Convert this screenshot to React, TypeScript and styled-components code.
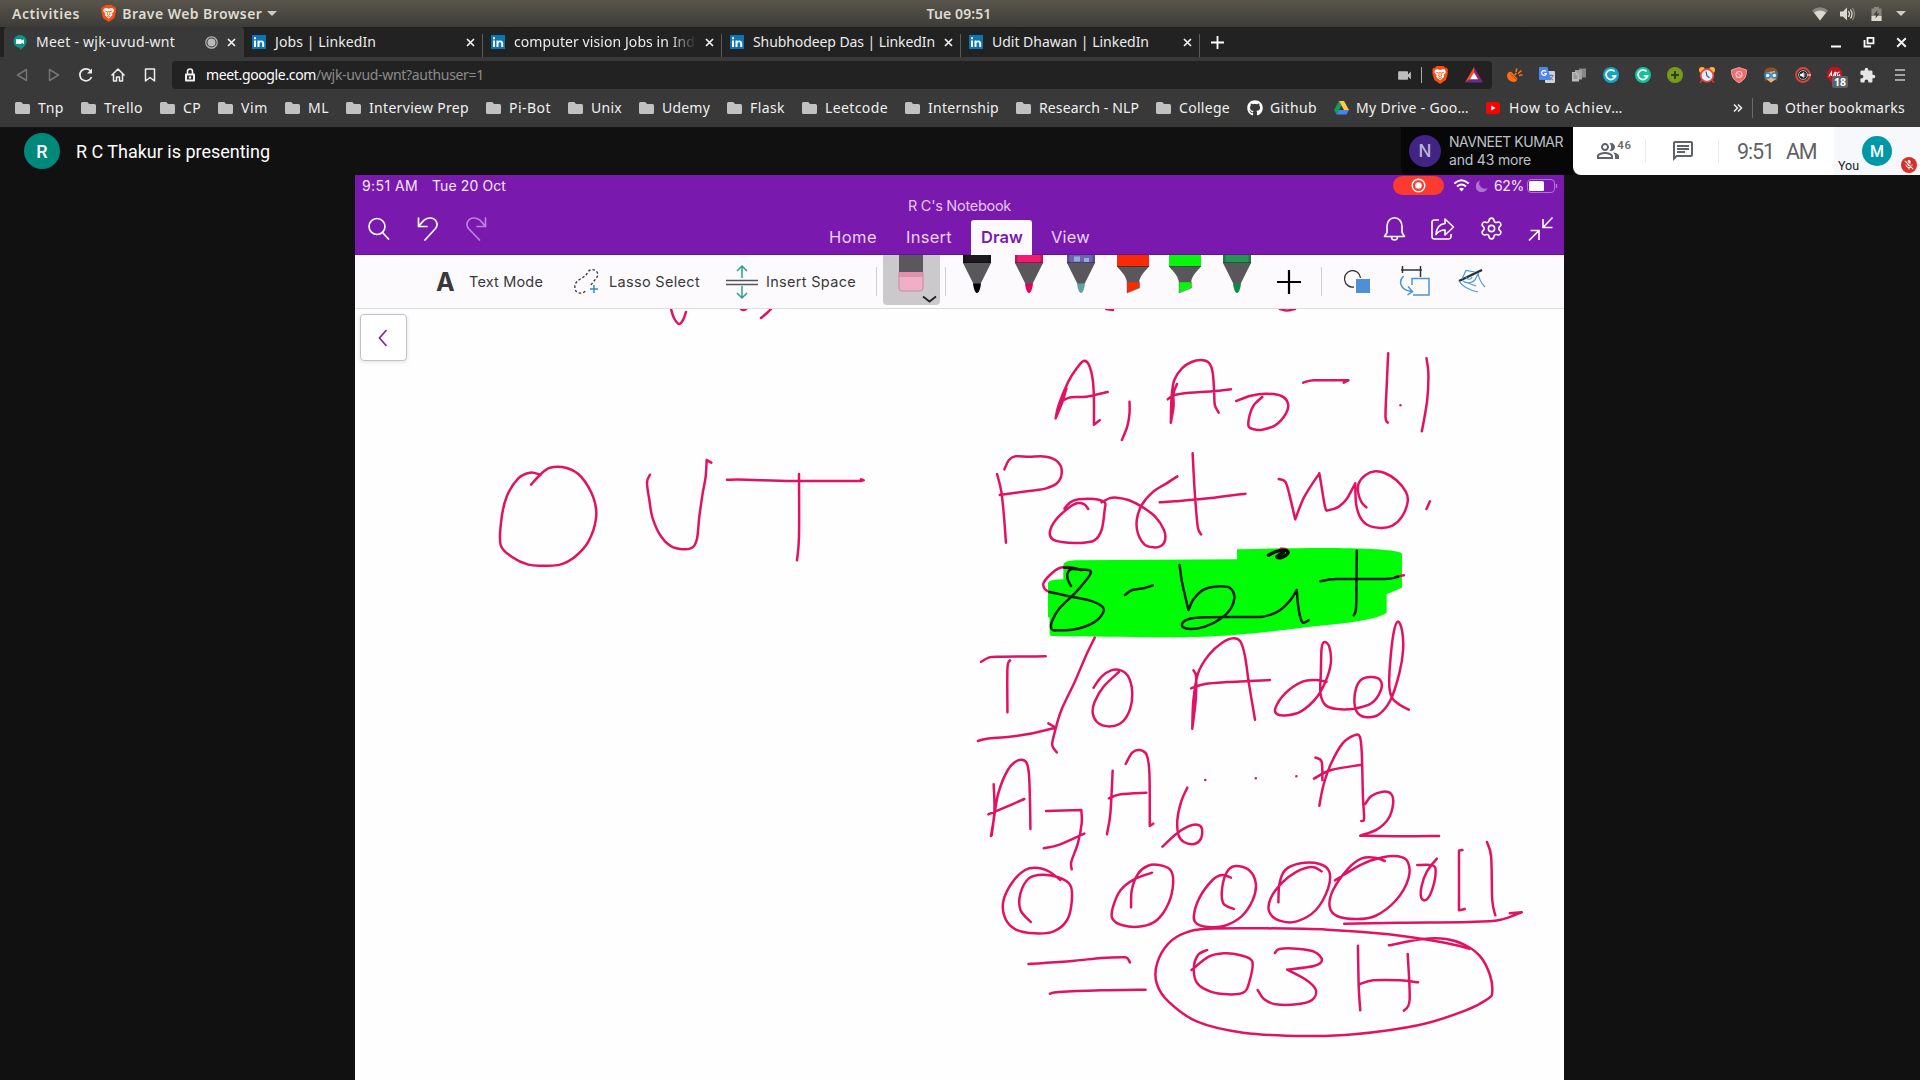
import React, { useLayoutEffect, useRef, useState } from 'react';
import styled, { createGlobalStyle } from 'styled-components';
import { FaGithub } from 'react-icons/fa';
import { MdExtension, MdOutlineChat, MdVideocam, MdMicOff, MdOutlinePeopleAlt } from 'react-icons/md';
import { Settings } from 'lucide-react';

const Global = createGlobalStyle`
  * { box-sizing: border-box; }
  body { margin: 0; background: #111; overflow: hidden; }
  svg { display: block; flex: none; }
`;

const UI = `"Noto Sans", "Open Sans", sans-serif`;
const MEET = `Roboto, "Noto Sans", sans-serif`;
const PAD = `Inter, "Liberation Sans", sans-serif`;

/* ---------- text that tracks itself to a fixed measure ---------- */

const Measure = styled.span<{ $w: number }>`
  display: block;
  flex: none;
  width: ${(p) => p.$w}px;
  white-space: nowrap;
`;

function Fit({ w, children }: { w: number; children: string }) {
  const ref = useRef<HTMLSpanElement>(null);
  const [track, setTrack] = useState(0);
  useLayoutEffect(() => {
    if (ref.current) {
      const natural = ref.current.getBoundingClientRect().width;
      setTrack((w - natural) / children.length);
    }
  }, [w, children]);
  return (
    <Measure $w={w}>
      <span ref={ref} style={{ letterSpacing: track }}>{children}</span>
    </Measure>
  );
}

/* ---------- desktop panel ---------- */

const Screen = styled.div`
  width: 1920px;
  height: 1080px;
  display: flex;
  flex-direction: column;
  overflow: hidden;
  font-family: ${UI};
`;

const DesktopBar = styled.header`
  height: 27px;
  flex: none;
  display: grid;
  grid-template-columns: 1fr auto 1fr;
  align-items: center;
  padding: 0 14px 0 12px;
  background: linear-gradient(#59554c, #3d3c38);
  color: #dfdbd2;
  font-size: 14px;
  font-weight: 600;
  line-height: 26px;
`;

const DesktopLeft = styled.div`
  display: flex;
  align-items: center;
`;

const AppMenu = styled.div`
  display: flex;
  align-items: center;
  margin-left: 21px;
  gap: 6px;
`;

const Caret = styled.span<{ $ml?: number }>`
  border: 5px solid transparent;
  border-top-color: #cfccc5;
  border-bottom: 0;
  margin-left: ${(p) => p.$ml ?? 0}px;
`;

const Tray = styled.div`
  display: flex;
  align-items: center;
  justify-content: flex-end;
`;

const TrayIcon = styled.span<{ $mr: number }>`
  margin-right: ${(p) => p.$mr}px;
`;

/* ---------- browser chrome ---------- */

const TabStrip = styled.div`
  height: 30px;
  flex: none;
  display: flex;
  background: #222;
  padding-left: 4px;
`;

const Tab = styled.div<{ $active?: boolean }>`
  width: ${(p) => (p.$active ? 240 : 239)}px;
  display: flex;
  align-items: center;
  padding: 0 8px 0 ${(p) => (p.$active ? 9 : 8)}px;
  background: ${(p) => (p.$active ? '#393939' : 'transparent')};
  border-radius: 4px 4px 0 0;
  color: #ececec;
  font-size: 14px;
  line-height: 20px;
  gap: 9px;
`;

const TabRule = styled.i`
  width: 1px;
  height: 23px;
  background: #5a5a5a;
  align-self: flex-end;
  margin-left: -1px;
`;

const TabTitle = styled.div<{ $fade?: boolean }>`
  flex: 1;
  min-width: 0;
  ${(p) => p.$fade && 'mask-image: linear-gradient(90deg, #000 86%, transparent 100%);'}
`;

const NewTab = styled.div`
  margin-left: 11px;
  display: flex;
  align-items: center;
`;

const WindowButtons = styled.div`
  margin-left: auto;
  display: flex;
  align-items: center;
  padding-right: 13px;
  gap: 21px;
`;

const Toolbar = styled.div`
  height: 36px;
  flex: none;
  display: flex;
  align-items: center;
  background: #393939;
  padding: 0 12px 0 14px;
`;

const NavIcons = styled.div`
  display: flex;
  gap: 16px;
  width: 158px;
`;

const AddressBar = styled.div`
  width: 1320px;
  height: 28px;
  border-radius: 4px;
  background: #222;
  display: flex;
  align-items: center;
  padding: 0 9px 0 12px;
  font-size: 14px;
  color: #8b8b8b;
  line-height: 20px;
  svg.lock { margin-right: 10px; }
`;

const Host = styled.span`
  color: #fff;
`;

const AddressEnd = styled.div`
  margin-left: auto;
  display: flex;
  align-items: center;
`;

const AddressRule = styled.i`
  width: 1px;
  height: 16px;
  background: #aaa;
  margin: 0 10px 0 8px;
`;

const Extensions = styled.div`
  flex: 1;
  display: flex;
  justify-content: space-between;
  margin-left: 15px;
`;

const Badged = styled.span`
  position: relative;
`;

const Badge = styled.b`
  position: absolute;
  left: 5px;
  top: 9px;
  width: 16px;
  height: 12px;
  border-radius: 2px;
  background: #5f6368;
  color: #fff;
  font-size: 10.5px;
  line-height: 12px;
  text-align: center;
`;

const Bookmarks = styled.nav`
  height: 34px;
  flex: none;
  display: flex;
  align-items: center;
  background: #393939;
  padding: 0 15px 4px;
  color: #f1f1f1;
  font-size: 14px;
  line-height: 20px;
`;

const Bookmark = styled.div<{ $gap: number }>`
  display: flex;
  align-items: center;
  gap: ${(p) => p.$gap}px;
  margin-right: 17px;
`;

const BookmarksEnd = styled.div`
  margin-left: auto;
  display: flex;
  align-items: center;
  gap: 7px;
`;

const EndRule = styled.i`
  width: 1px;
  height: 20px;
  background: #6a6a6a;
  margin: 0 3px 0 2px;
`;

/* ---------- Meet ---------- */

const MeetBar = styled.div`
  height: 48px;
  flex: none;
  display: flex;
  align-items: center;
  background: #111;
  padding-left: 24px;
  font-family: ${MEET};
`;

const Avatar = styled.div<{ $size: number; $bg: string; $fs: number }>`
  width: ${(p) => p.$size}px;
  height: ${(p) => p.$size}px;
  border-radius: 50%;
  background: ${(p) => p.$bg};
  color: #fff;
  font-size: ${(p) => p.$fs}px;
  font-weight: 500;
  display: flex;
  align-items: center;
  justify-content: center;
  flex: none;
`;

const Presenting = styled.div`
  margin-left: 16px;
  color: #fff;
  font-size: 18px;
`;

const Speaker = styled.div`
  margin-left: auto;
  width: 172px;
  height: 48px;
  background: #070707;
  border-radius: 0 0 0 6px;
  color: #bdc1c6;
  display: flex;
  align-items: center;
  gap: 8px;
  padding: 0 0 1px 8px;
  font-size: 14px;
  line-height: 18px;
  font-family: Inter, sans-serif;
`;

const DimAvatar = styled(Avatar)`
  color: #bdb6d4;
`;

const MeetPanel = styled.div`
  width: 347px;
  height: 48px;
  background: #fff;
  border-radius: 0 0 0 8px;
  display: flex;
  align-items: stretch;
  color: #5f6368;
`;

const PanelCell = styled.div<{ $w: number; $line?: boolean }>`
  width: ${(p) => p.$w}px;
  display: flex;
  align-items: center;
  justify-content: center;
  background: ${(p) => (p.$line ? 'linear-gradient(#e8eaed, #e8eaed) right center / 1px 24px no-repeat' : 'none')};
`;

const PeopleIcon = styled.span`
  margin-left: 9px;
`;

const Count = styled.sup`
  font-size: 11.5px;
  font-weight: 500;
  line-height: 12px;
  margin: 0 0 12px -3px;
  letter-spacing: 0.6px;
`;

const Clock = styled.div`
  font-size: 21.5px;
  display: flex;
  gap: 12px;
`;

const Self = styled.div`
  flex: 1;
  background: #f7f8fc;
  display: flex;
  align-items: flex-end;
  padding: 0 3px 2px 4px;
  font-size: 12.5px;
  color: #202124;
  line-height: 15px;
`;

const SelfAvatar = styled.div`
  margin: 0 17px 7px 3px;
`;

const Muted = styled.div`
  width: 16px;
  height: 16px;
  border-radius: 50%;
  background: #d93025;
  color: #fff;
  display: flex;
  align-items: center;
  justify-content: center;
  flex: none;
  margin-left: -8px;
`;

/* ---------- shared tablet ---------- */

const Stage = styled.main`
  flex: 1;
  min-height: 0;
  background: #111;
  padding-left: 355px;
`;

const Tablet = styled.section`
  width: 1209px;
  height: 905px;
  display: flex;
  flex-direction: column;
  background: #fefefe;
  font-family: ${PAD};
`;

const PurpleHead = styled.div`
  height: 80px;
  background: #7a19ad;
  color: #f6e9fc;
  display: grid;
  grid-template-columns: 466px 1fr 181px;
  border-bottom: 1px solid #641494;
`;

const HeadSide = styled.div`
  display: flex;
  flex-direction: column;
`;

const Status = styled.div<{ $right?: boolean }>`
  height: 22px;
  display: flex;
  align-items: center;
  gap: ${(p) => (p.$right ? 0 : 14)}px;
  padding: 0 0 1px ${(p) => (p.$right ? 10 : 7)}px;
  font-size: 14px;
  line-height: 20px;
`;

const RecordPill = styled.div`
  width: 51px;
  height: 19px;
  border-radius: 10px;
  background: #fc3b30;
  display: flex;
  align-items: center;
  justify-content: center;
  margin-right: 9px;
`;

const MoonIcon = styled.span`
  margin: 0 6px;
`;

const BatteryIcon = styled.span`
  margin-left: 3px;
`;

const HeadIcons = styled.div<{ $pl: number; $gap: number }>`
  flex: 1;
  display: flex;
  align-items: flex-start;
  padding: 19px 0 0 ${(p) => p.$pl}px;
  gap: ${(p) => p.$gap}px;
`;

const HeadMiddle = styled.div`
  display: flex;
  flex-direction: column;
`;

const NoteTitle = styled.div`
  padding: 22px 0 0 87px;
  height: 45px;
  font-size: 14.5px;
  line-height: 18px;
  color: #e6c5f5;
`;

const RibbonTabs = styled.div`
  display: flex;
  align-items: stretch;
  flex: 1;
  font-size: 16.5px;
  line-height: 35px;
  color: #ecd2f8;
`;

const RibbonTab = styled.div<{ $active?: boolean; $ml: number }>`
  margin-left: ${(p) => p.$ml}px;
  margin-bottom: -1px;
  ${(p) => p.$active && 'background:#fcfafd;color:#7a19ad;font-weight:600;border-radius:3px 3px 0 0;padding:0 9px 0 10px;'}
`;

const Ribbon = styled.div`
  height: 54px;
  flex: none;
  background: #fcfafd;
  border-bottom: 1px solid #dedde0;
  display: flex;
  align-items: center;
  color: #3a383c;
  font-size: 14.5px;
  padding-left: 81px;
`;

const Tool = styled.div<{ $iw: number; $gap: number; $ml: number }>`
  display: flex;
  align-items: center;
  margin-left: ${(p) => p.$ml}px;
  svg { width: ${(p) => p.$iw}px; margin-right: ${(p) => p.$gap}px; }
`;

const BoldA = styled.span`
  font-size: 25px;
  font-weight: 700;
  width: 33px;
  line-height: 30px;
`;

const RibbonRule = styled.i<{ $ml: number }>`
  width: 1px;
  height: 29px;
  background: #cfcdd1;
  margin-left: ${(p) => p.$ml}px;
`;

const EraserSlot = styled.div`
  width: 57px;
  height: 50px;
  align-self: flex-start;
  margin-left: 6px;
  background: #cbc9cc;
  border-radius: 0 0 4px 4px;
`;

const Pens = styled.div`
  display: flex;
  align-self: flex-start;
  gap: 20px;
  margin-left: 15px;
`;

const RibbonIcon = styled.div<{ $ml: number }>`
  margin-left: ${(p) => p.$ml}px;
`;

const Page = styled.div`
  flex: 1;
  min-height: 0;
  position: relative;
`;

const BackButton = styled.div`
  position: absolute;
  left: 5px;
  top: 5px;
  width: 47px;
  height: 47px;
  border: 1px solid #c4c2c6;
  border-radius: 4px;
  background: #fff;
  box-shadow: 0 1px 4px rgba(0, 0, 0, 0.12);
  display: flex;
  align-items: center;
  justify-content: center;
  padding-right: 2px;
`;

/* ---------- icons ---------- */

const BraveLion = ({ s = 17 }: { s?: number }) => (
  <svg width={s * 0.9} height={s} viewBox="0 0 16 18">
    <path d="M4.500 0h7l1.600 1.800 1.500-.1L16 4l-.6 1.600.4 1.400-2 7L8 18l-5.800-4-2-7 .4-1.400L0 4l1.400-2.300 1.500.1z" fill="#fb4c12" />
    <path d="M3.300 3.600 5.500 3.300 8 4l2.500-.7 2.200.3 1.200 2.400-2.300 3 .4 1.800L9.600 13 8 14.600 6.400 13 4 10.800 4.400 9 2.100 6z" fill="#fff" />
    <path d="M4.200 6.300l2.500.8L8 6.600l1.300.5 2.500-.8M7.100 7.500 6.500 10 8 11l1.500-1-.6-2.500M6.400 11.700 8 12.600l1.600-.9" fill="none" stroke="#fb4c12" strokeWidth=".9" />
  </svg>
);

const BatMark = styled.svg`
  margin-left: 17px;
`;

const Folder = () => (
  <svg width="15" height="14" viewBox="0 0 15 14">
    <path d="M1.500 1h4.800l1.700 2h5.500A1.500 1.500 0 0 1 15 4.500v7a1.500 1.500 0 0 1-1.500 1.500h-12A1.500 1.500 0 0 1 0 11.500v-9A1.500 1.500 0 0 1 1.500 1z" fill="#c1c1c1" />
  </svg>
);

const LinkedIn = () => (
  <svg width="14" height="14" viewBox="0 0 14 14">
    <rect width="14" height="14" fill="#0a76b7" />
    <path d="M2 5.500h2V12H2zM2 2.200h2v2H2zM5.500 5.500h2v1c.8-1.600 4.700-1.700 4.700 1.800V12h-2V8.700c0-2.100-2.700-2-2.700 0V12h-2z" fill="#fff" />
  </svg>
);

const Cross = ({ s = 9, w = 1.7 }: { s?: number; w?: number }) => (
  <svg width={s} height={s} viewBox="0 0 9 9"><path d="M1 1l7 7M8 1 1 8" stroke="#f2f2f2" strokeWidth={w} /></svg>
);

const MeetMark = () => (
  <svg width="14" height="15" viewBox="0 0 14 15">
    <path d="M7 0a6.300 6.300 0 0 1 6.500 6.300C13.500 10.500 10 13 6.800 15v-2.300A6.300 6.300 0 0 1 7 0z" fill="#0d9485" />
    <path d="M3 4.300h5.500v1.500L11 4.300v4.600L8.500 7.400v1.500H3z" fill="#fff" />
  </svg>
);

const Triangle = ({ flip }: { flip?: boolean }) => (
  <svg width="16" height="16" viewBox="0 0 16 16">
    <path d={flip ? 'M3.500 2.500 12.500 8l-9 5.500z' : 'M12.500 2.500 3.500 8l9 5.500z'} fill="none" stroke="#747474" strokeWidth="1.500" strokeLinejoin="round" />
  </svg>
);

const Grammar = ({ c }: { c: string }) => (
  <svg width="16" height="16" viewBox="0 0 16 16">
    <circle cx="8" cy="8" r="8" fill={c} />
    <path d="M11.500 4.500A4.800 4.800 0 1 0 12.600 8.800H8.800M11 11l1.700-2" fill="none" stroke="#fff" strokeWidth="1.700" />
  </svg>
);

const ExtensionRow = () => (
  <Extensions>
    <svg width="16" height="16" viewBox="0 0 16 16">
      <path d="M1.500 5.500c3-2 4 1 6 3s4 3.500 2 5.500c-2 1.600-6 1-8-1.500s-2-5.500 0-7z" fill="#ff6f0f" />
      <path d="M7.500 8l2-1.800M9 5 9.800 1.500M11 6.500l3.500-3M12 8.500l3.500-.8" stroke="#ff6f0f" strokeWidth="1.600" />
      <path d="M3 6.500l6.500 6" stroke="#8a3d0c" strokeWidth=".8" />
    </svg>
    <svg width="16" height="16" viewBox="0 0 16 16">
      <rect x="6" y="4" width="10" height="12" rx="1" fill="#cfd1d4" />
      <path d="M9.500 8.500h5M12 7.500v1M13.800 8.500c-.5 2-2 3.500-3.500 4.500M10.500 9.500c.8 1.500 2 2.800 3.500 3.500" stroke="#5c7f9e" fill="none" />
      <path d="M1 0h7.500L12 13H1a1 1 0 0 1-1-1V1a1 1 0 0 1 1-1z" fill="#4a87ee" />
      <path d="M7 4.500A2.400 2.400 0 1 0 7.400 6.500H5.200" fill="none" stroke="#fff" strokeWidth="1.200" />
    </svg>
    <svg width="16" height="16" viewBox="0 0 16 16">
      <path d="M8 1.500h7v9H8z" fill="#878787" /><path d="M4 3h7v9.500H4z" fill="#a2a2a2" /><path d="M1 5h4l3 3v6.500H1z" fill="#bcbcbc" />
      <path d="M2.500 9h4M2.500 11h4M2.500 7h2" stroke="#777" />
    </svg>
    <Grammar c="#16a5c4" />
    <Grammar c="#15c39a" />
    <svg width="16" height="16" viewBox="0 0 16 16"><circle cx="8" cy="8" r="8" fill="#779b1d" /><path d="M8 4v8M4 8h8" stroke="#333d10" strokeWidth="2" /></svg>
    <svg width="16" height="16" viewBox="0 0 16 16">
      <path d="M3 13 1 16M13 13l2 3" stroke="#d32" strokeWidth="1.500" />
      <circle cx="3" cy="3" r="3" fill="#ffb92e" /><circle cx="13" cy="3" r="3" fill="#ffb92e" />
      <circle cx="8" cy="8.500" r="6.300" fill="#e8eef7" stroke="#ee4444" strokeWidth="1.700" />
      <path d="M7 4.500l1 4.500 2.500 1.800" stroke="#345ba5" fill="none" strokeWidth="1.200" />
    </svg>
    <svg width="16" height="16" viewBox="0 0 16 16">
      <path d="M8 .5 15.500 3c0 6-1.500 10-7.500 12.700C2 13 .5 9 .5 3z" fill="#ef6c6c" stroke="#f4a0a0" />
      <circle cx="8" cy="7.500" r="3" fill="none" stroke="#fbd3d3" strokeWidth="1.100" /><path d="M6 5.500l4 4" stroke="#fbd3d3" />
    </svg>
    <svg width="16" height="16" viewBox="0 0 16 16">
      <path d="M1 7C1 2 4 .5 8 .5S15 2 15 7l-1 7-2-1-4 3-4-3-2 1z" fill="#8a5420" /><path d="M3 5.500 12 4l1 8-5 3.500L3.500 12z" fill="#e9b27c" />
      <circle cx="4.700" cy="8.500" r="2.500" fill="#e6f3ff" stroke="#1d87dd" strokeWidth="1.400" /><circle cx="11.300" cy="8.500" r="2.500" fill="#e6f3ff" stroke="#1d87dd" strokeWidth="1.400" />
    </svg>
    <svg width="16" height="16" viewBox="0 0 16 16">
      <circle cx="8" cy="8" r="7" fill="#3d3d3d" stroke="#e5423b" strokeWidth="1.800" /><circle cx="8" cy="8" r="4.400" fill="#1c1c1c" stroke="#aaa" />
      <path d="M5.500 7h1.300L8.500 5.400v5.200L6.800 9H5.500zM9.800 6v4" fill="#fff" stroke="#fff" strokeWidth=".6" /><path d="M12 8h4" stroke="#ddd" strokeWidth="1.300" />
    </svg>
    <Badged>
      <svg width="16" height="16" viewBox="0 0 16 16">
        <path d="M4 0h7l4 4v6l-4 5H4L0 10.500V4.500z" fill="#c5101d" />
        <path d="M2 9.500 4.500 5v4M6 9.500 8 5M8 5c2 0 1 2-.5 2 2 0 1 2.400-1 2.200M12.500 5c-3 0-2.500 4.500-.5 4 1 0 1-1.500.3-1.800" stroke="#fff" strokeWidth="1.100" fill="none" />
      </svg>
      <Badge>18</Badge>
    </Badged>
    <MdExtension size={17} color="#e6e6e6" />
    <svg width="16" height="16" viewBox="0 0 16 16"><path d="M3 3h10M3 8h10M3 13h10" stroke="#c4c4c4" strokeWidth="1.700" /></svg>
  </Extensions>
);

const Pen = ({ cap, tip, galaxy }: { cap: string; tip: string; galaxy?: boolean }) => (
  <svg width="32" height="40" viewBox="0 0 32 40">
    <path d="M2 8h28l-10.500 21h-7z" fill="#59575b" />
    <path d="M12 28.500h8C19.500 33 18 38 16 38s-3.500-5-4-9.500z" fill={tip} />
    <path d="M2 0h28v8H2z" fill={cap} />
    {galaxy && <path d="M9 1.500h6v5H9zM19 3h5v4h-5z" fill="#9fd0e6" opacity=".7" />}
    <path d="M2 0h2.500v8H2zM27.500 0H30v8h-2.500z" fill="#000" opacity=".2" />
    <path d="M2 7.500h28" stroke="#000" strokeOpacity=".35" />
  </svg>
);

const Marker = ({ c }: { c: string }) => (
  <svg width="32" height="40" viewBox="0 0 32 40" overflow="visible">
    <path d="M0 11h32c-1 3-9 8-10 16.500H10C9 19 1 14 0 11z" fill="#59575b" />
    <path d="M10 27h12.500v6L10 38z" fill={c} stroke="#555" strokeOpacity=".5" strokeWidth=".8" />
    <path d="M0 0h32v11.500H0z" fill={c} /><path d="M0 11.500h32" stroke="#000" strokeOpacity=".4" />
  </svg>
);

/* ---------- handwriting ---------- */

type Point = [number, number];

/* Turns "x,y x,y ..." samples into a smooth pen stroke. */
function ink(samples: string): string {
  const p = samples.trim().split(/\s+/).map((s) => s.split(',').map(Number) as Point);
  if (p.length === 1) return `M${p[0][0]} ${p[0][1]}h.1`;
  let d = `M${p[0][0]} ${p[0][1]}`;
  for (let i = 0; i < p.length - 1; i++) {
    const a = p[i - 1] ?? p[i];
    const b = p[i];
    const c = p[i + 1];
    const e = p[i + 2] ?? c;
    d += `C${b[0] + (c[0] - a[0]) / 6} ${b[1] + (c[1] - a[1]) / 6} ${c[0] - (e[0] - b[0]) / 6} ${c[1] - (e[1] - b[1]) / 6} ${c[0]} ${c[1]}`;
  }
  return d;
}

const OUT_WORD = [
  '153,134 180,105 210,83 260,84 303,110 341,175 348,235 325,305 285,350 240,374 190,377 145,374 95,350 62,315 64,240 80,170 115,115 150,98 182,104',
  '510,104 501,128 508,180 518,235 545,292 580,322 630,326 650,300 658,230 668,160 677,110 680,60',
  '680,60 694,68',
  '741,119 800,119 940,123 1143,123',
  '1143,118 1152,121 1143,123',
  '957,102 957,290 951,361',
];

const ADDRESS_LINES = [
  '250,325 258,285 283,215 305,175 323,153 337,165 347,210 350,270 350,344',
  '350,344 365,331',
  '250,325 268,275 278,235',
  '268,272 290,262 330,260 386,246',
  '443,275 443,310 437,350 423,390',
  '551,338 553,260 560,210 580,175 605,156 630,150 650,158 660,185 664,240 666,285 676,308',
  '551,338 558,290 558,250 567,222',
  '543,268 560,255 600,248 660,244 708,238',
  '722,273 760,257 800,251 840,258 857,280 852,310 825,345 790,359 765,357 754,348 757,315 768,285 790,261',
  '897,218 925,211 1015,211',
  '1015,211 1003,218',
  '1119,130 1115,230 1112,320 1118,338',
  '1151,286',
  '1219,145 1224,190 1221,270 1207,364',
  '97,492 108,545 115,620 120,698',
  '116,478 128,450 145,439 180,440 225,440 255,455 266,485 255,518 225,535 180,543 104,555',
  '335,597 325,583 305,580 280,597 250,630 235,665 242,688 270,697 310,699 350,692 370,660 378,600 378,577 350,567 310,568 288,577 273,596',
  '370,577 390,565 410,563 440,570 475,590 510,620 533,660 536,690 525,708 505,712 482,703 465,670 462,630 475,585 505,545 540,520 568,499',
  '608,430 612,520 617,600 622,655 630,673',
  '522,577 560,574 650,565 746,551',
  '833,507 850,515 860,550 876,628',
  '876,628 900,560 939,490',
  '939,490 945,530 955,595 965,600 990,590 1010,568 1033,520',
  '1033,520 1035,580 1045,620 1065,645 1100,654 1130,647 1155,620 1170,575 1165,545 1140,510 1110,489 1085,484 1060,495 1042,520 1041,550 1050,578 1062,592',
  '1228,574 1219,597',
];

const BIT_PINK = ['318,90 290,82 260,84 235,105 218,130 222,148 234,156', '1140,110 1160,106', '838,26 850,27 857,34'];

const BIT_BLACK = [
  '290,138 282,120 281,100 290,88 310,88 335,90 342,98 330,120 300,160 260,205 240,245 240,268 255,271 300,268 350,247 375,215 370,198 340,182 290,170 234,156',
  '272,83 295,85 318,90',
  '431,165 450,150 480,145 504,136',
  '574,75 580,125 597,210',
  '597,210 612,175 640,147 680,139 705,143 717,170 708,205 680,237 640,260 605,267 583,262 582,248 598,237 640,232 740,231 790,230 830,215 860,185 880,150',
  '880,150 884,200 890,235 897,248 911,241',
  '1037,32 1036,120 1035,205 1029,226',
  '942,124 985,117 1110,117 1145,110',
];

const IO_LINES = [
  '55,366 75,353 100,350 224,349',
  '131,361 124,385 124,517',
  '47,603 70,596 130,590 190,580 250,563',
  '250,563 231,550',
  '352,293 330,345 300,425 265,510 248,575 241,615 253,637',
  '349,443 370,410 395,391 420,391 440,410 450,455 445,505 425,545 395,559 362,550 347,520 352,485 375,440 415,396',
  '607,566 610,480 622,400 650,345 685,308 715,295 733,305 745,350 755,430 771,539',
  '607,566 616,480 617,410 610,391',
  '604,445 640,432 700,426 810,420',
  '958,425 930,420 895,425 850,460 824,505 830,523 855,526 890,515 930,475 955,425 969,370 965,320 952,306 945,325 943,400 942,460 955,495 985,507 1030,506 1075,490 1100,450 1098,420 1075,411 1050,418 1035,445 1031,490 1040,520 1065,532 1095,523 1125,480 1148,400 1158,330 1155,270 1144,245 1133,280 1124,370 1122,440 1130,475 1150,495 1173,509',
];

const BINARY_LINES = [
  '81,348 88,300 100,220 125,150 150,122 172,125 180,160 183,250 184,327',
  '88,193 90,270 83,345',
  '74,283 110,266 168,237',
  '225,273 317,270',
  '317,270 318,310 308,370 291,425 292,448',
  '219,385 260,374 325,341',
  '384,343 393,280 399,152',
  '433,132 450,98 470,90 488,105 495,160 496,318',
  '496,318 505,311',
  '389,235 420,223 487,218',
  '594,203 578,245 568,300 571,345 585,366 612,372 630,355 632,325 620,314 595,320 565,342 529,380',
  '641,180',
  '773,175',
  '879,169',
  '929,113 945,125 947,180',
  '939,257 950,195 970,130 1000,70 1030,46 1045,50 1050,100 1053,230 1056,295 1049,303',
  '925,176 970,150 1046,135',
  '1059,252 1075,228 1105,215 1127,222 1132,250 1120,295 1090,328 1046,347',
  '1046,347 1150,349 1252,348',
  '262,480 235,456 205,444 170,450 135,490 113,545 118,595 145,628 195,640 245,634 280,600 292,545 288,495 258,472 215,464 180,475 158,520 158,570 185,606',
  '447,562 449,510 465,462 490,438 520,435 550,450 557,490 545,550 515,600 475,619 425,616 398,595 400,560 420,510 455,478 502,458',
  '708,473 685,465 660,480 625,535 611,590 620,612 650,621 690,618 735,590 765,540 773,490 755,450 720,438 698,455 685,505 688,550 716,567',
  '832,547 835,490 850,450 890,430 940,432 965,455 962,505 930,570 880,604 835,602 808,575 812,535 840,490 880,455 920,441 945,454',
  '1110,423 1085,413 1050,415 1015,445 975,510 966,560 985,588 1035,597 1085,588 1140,540 1172,475 1170,425 1145,409 1105,412 1050,433 980,481',
  '1195,435 1235,436 1243,455 1235,505 1220,538 1206,535 1206,500 1220,455 1246,416',
  '1313,390 1304,392',
  '1304,392 1304,571',
  '1304,571 1319,567',
  '1377,366 1388,410 1391,540 1399,586',
  '1004,611 1150,608 1330,606 1410,600 1468,577',
  '1468,577 1437,580',
  '1332,686 1260,667 1120,643 960,629 800,625 650,626 590,638 545,670 515,730 514,790 545,845 620,905 740,938 900,948 1030,943 1200,915 1320,872 1380,836 1391,815 1385,765 1360,710 1320,675 1270,657 1210,657 1121,676',
  '179,732 220,729 300,722 370,714 425,712 437,714 444,727',
  '235,821 260,816 370,811 485,809',
  '646,690 622,705 611,745 620,790 655,815 700,823 740,818 755,790 764,725 730,705 690,700 650,710 605,750',
  '823,699 835,687 880,686 925,695 946,720 925,738 855,749',
  '855,749 905,780 930,810 920,840 880,853 825,853 795,838 778,810',
  '1040,677 1042,800 1046,871',
  '1170,702 1175,840 1160,872',
  '1046,792 1080,781 1150,781 1197,787',
];

const CUT_OFF = [
  '671,309 674,318 679,324 683,320 686,312',
  '741,309 743,310 746,309',
  '771,309 767,313 761,318',
  '1106,309 1113,310',
  '1280,309 1287,310.5 1295,309',
];

const SX = 0.38265;
const SY = 0.33333;

const InkPath = styled.path<{ $c?: string; $w?: number }>`
  fill: none;
  stroke: ${(p) => p.$c ?? '#e21262'};
  stroke-width: ${(p) => p.$w ?? 2.5}px;
  stroke-linecap: round;
  stroke-linejoin: round;
  vector-effect: non-scaling-stroke;
`;

function Ink({ at, sx = SX, lines, color, w }: { at: string; sx?: number; lines: string[]; color?: string; w?: number }) {
  return (
    <g transform={`translate(${at}) scale(${sx} ${sx === 1 ? 1 : SY})`}>
      <InkPath d={lines.map(ink).join('')} $c={color} $w={w} />
    </g>
  );
}

const Handwriting = () => (
  <svg width="1209" height="771" viewBox="355 309 1209 771">
    <g transform={`translate(960 540) scale(${SX} ${SY})`}>
      <path
        d="M270 75Q272 62 300 61L724 58V28C900 22 1060 22 1110 30Q1155 34 1155 42V143L1115 163V218Q1090 240 960 255C850 268 760 285 640 290C500 294 400 290 240 288Q234 288 234 280V232H230V128Q235 118 270 118Z"
        fill="#00fd05"
      />
    </g>
    <Ink at="0 0" sx={1} lines={CUT_OFF} />
    <Ink at="480 440" sx={0.33333} lines={OUT_WORD} />
    <Ink at="960 310" lines={ADDRESS_LINES} />
    <Ink at="960 540" lines={BIT_PINK} />
    <Ink at="960 540" lines={BIT_BLACK} color="#06200a" />
    <Ink at="960 540" lines={['806,46 825,35 850,31 857,40 840,53 828,50 845,38']} color="#050d05" w={3.4} />
    <Ink at="960 540" lines={IO_LINES} />
    <Ink at="960 720" lines={BINARY_LINES} />
  </svg>
);

/* ---------- data ---------- */

const TABS = [
  { title: 'Jobs | LinkedIn', w: 101 },
  { title: 'computer vision Jobs in Ind', w: 181, fade: true },
  { title: 'Shubhodeep Das | LinkedIn', w: 182 },
  { title: 'Udit Dhawan | LinkedIn', w: 157 },
];

const FOLDERS: [string, number][] = [
  ['Tnp', 26], ['Trello', 39], ['CP', 18], ['Vim', 27], ['ML', 21], ['Interview Prep', 100], ['Pi-Bot', 42],
  ['Unix', 31], ['Udemy', 48], ['Flask', 35], ['Leetcode', 63], ['Internship', 71], ['Research - NLP', 100], ['College', 51],
];

export default function App() {
  return (
    <Screen>
      <Global />
      <DesktopBar>
        <DesktopLeft>
          <Fit w={68}>Activities</Fit>
          <AppMenu>
            <BraveLion s={17} />
            <Fit w={140}>Brave Web Browser</Fit>
          </AppMenu>
          <Caret $ml={5} />
        </DesktopLeft>
        <Fit w={65}>Tue 09:51</Fit>
        <Tray>
          <TrayIcon $mr={12}>
            <svg width="16" height="14" viewBox="0 0 16 14">
              <path d="M0 3.500Q8-3 16 3.500L8 13.500z" fill="#8a8780" /><path d="M2 5.500Q8 1.500 14 5.500L8 13.500z" fill="#dcd8d0" />
            </svg>
          </TrayIcon>
          <TrayIcon $mr={15}>
            <svg width="16" height="14" viewBox="0 0 16 14">
              <path d="M0 4.500h3L7 .5v13L3 9.500H0z" fill="#dcd8d0" /><path d="M8.500 4q2 3 0 6M10.500 2.500q3 4.500 0 9" fill="none" stroke="#dcd8d0" strokeWidth="1.300" />
              <path d="M12.500 1q4 6 0 12" fill="none" stroke="#8a8780" strokeWidth="1.300" />
            </svg>
          </TrayIcon>
          <TrayIcon $mr={14}>
            <svg width="11" height="14" viewBox="0 0 11 14">
              <path d="M3 0h5v1.500h2.500V14H.5V1.500H3z" fill="#8a8780" /><path d="M.5 9h10v5H.5z" fill="#dcd8d0" />
              <path d="M6.500 3 2.500 8H5l-.5 3.500L8.500 6.500H6z" fill="#44423d" />
            </svg>
          </TrayIcon>
          <Caret />
        </Tray>
      </DesktopBar>

      <TabStrip>
        <Tab $active>
          <MeetMark />
          <TabTitle><Fit w={139}>Meet - wjk-uvud-wnt</Fit></TabTitle>
          <svg width="13" height="13" viewBox="0 0 13 13">
            <circle cx="6.500" cy="6.500" r="5.700" fill="none" stroke="#b9b9b9" strokeWidth="1.200" /><circle cx="6.500" cy="6.500" r="4" fill="#b9b9b9" />
          </svg>
          <Cross />
        </Tab>
        {TABS.map((t) => (
          <React.Fragment key={t.title}>
            <Tab>
              <LinkedIn />
              <TabTitle $fade={t.fade}><Fit w={t.w}>{t.title}</Fit></TabTitle>
              <Cross />
            </Tab>
            <TabRule />
          </React.Fragment>
        ))}
        <NewTab>
          <svg width="13" height="13" viewBox="0 0 13 13"><path d="M6.500 0v13M0 6.500h13" stroke="#fff" strokeWidth="1.800" /></svg>
        </NewTab>
        <WindowButtons>
          <svg width="12" height="12" viewBox="0 0 12 12"><path d="M1 10.500h10" stroke="#fff" strokeWidth="2" /></svg>
          <svg width="12" height="12" viewBox="0 0 12 12"><path d="M4.500 1.800h6v5.500h-6zM1.500 4v6.500H8" fill="none" stroke="#fff" strokeWidth="1.800" /></svg>
          <Cross s={11} w={1.6} />
        </WindowButtons>
      </TabStrip>

      <Toolbar>
        <NavIcons>
          <Triangle />
          <Triangle flip />
          <svg width="16" height="16" viewBox="0 0 16 16"><path d="M12.800 4.300A6 6 0 1 0 13.500 10" fill="none" stroke="#ededed" strokeWidth="1.700" /><path d="M14 1.500v5H9z" fill="#ededed" /></svg>
          <svg width="16" height="16" viewBox="0 0 16 16"><path d="M1.500 8.500 8 2l6.500 6.500M3.500 7v7h3v-4h3v4h3V7" fill="none" stroke="#ededed" strokeWidth="1.500" strokeLinejoin="round" /></svg>
          <svg width="16" height="16" viewBox="0 0 16 16"><path d="M3.500 2h9v12L8 10.500 3.500 14z" fill="none" stroke="#ededed" strokeWidth="1.500" strokeLinejoin="round" /></svg>
        </NavIcons>
        <AddressBar>
          <svg className="lock" width="12" height="14" viewBox="0 0 12 14"><path d="M3.500 6V3.500a2.500 2.500 0 0 1 5 0V6" fill="none" stroke="#f0f0f0" strokeWidth="1.600" /><rect x="1" y="5.500" width="10" height="8" rx="1" fill="#f0f0f0" /><path d="M3 7.500h6v4H3z" fill="#222" /><circle cx="6" cy="9.500" r="1.300" fill="#f0f0f0" /></svg>
          <Host><Fit w={110}>meet.google.com</Fit></Host>
          <Fit w={168}>/wjk-uvud-wnt?authuser=1</Fit>
          <AddressEnd>
            <MdVideocam size={17} color="#bdbdbd" />
            <AddressRule />
            <BraveLion s={18} />
            <BatMark width="18" height="16" viewBox="0 0 18 16">
              <path d="M9 0 0 15.500 9 10z" fill="#ff4724" /><path d="M9 0l9 15.500L9 10z" fill="#9e1f63" /><path d="M0 15.500h18L9 10z" fill="#662d91" /><path d="M9 5.500 5 12.300h8z" fill="#fff" />
            </BatMark>
          </AddressEnd>
        </AddressBar>
        <ExtensionRow />
      </Toolbar>

      <Bookmarks>
        {FOLDERS.map(([name, w]) => (
          <Bookmark key={name} $gap={8}><Folder /><Fit w={w}>{name}</Fit></Bookmark>
        ))}
        <Bookmark $gap={7}><FaGithub size={16} color="#fff" /><Fit w={47}>Github</Fit></Bookmark>
        <Bookmark $gap={7}>
          <svg width="15" height="14" viewBox="0 0 15 14"><path d="M5 0 0 9l2.500 4.500L7.500 4.700z" fill="#0f9d58" /><path d="M5 0h5l5 9h-5z" fill="#ffcd40" /><path d="M5 9h10l-2.500 4.500h-10z" fill="#4285f4" /></svg>
          <Fit w={113}>My Drive - Goo…</Fit>
        </Bookmark>
        <Bookmark $gap={9}>
          <svg width="14" height="12" viewBox="0 0 14 12"><rect width="14" height="12" rx="2.500" fill="#f00" /><path d="M5.200 3.500 9.500 6l-4.300 2.500z" fill="#fff" /></svg>
          <Fit w={114}>How to Achiev…</Fit>
        </Bookmark>
        <BookmarksEnd>
          <svg width="10" height="8" viewBox="0 0 10 8"><path d="M1 .5 4.500 4 1 7.500M5 .5 8.500 4 5 7.500" fill="none" stroke="#f0f0f0" strokeWidth="1.500" /></svg>
          <EndRule />
          <Folder />
          <Fit w={120}>Other bookmarks</Fit>
        </BookmarksEnd>
      </Bookmarks>

      <MeetBar>
        <Avatar $size={36} $bg="#00897b" $fs={18}>R</Avatar>
        <Presenting><Fit w={194}>R C Thakur is presenting</Fit></Presenting>
        <Speaker>
          <DimAvatar $size={32} $bg="#412484" $fs={17}>N</DimAvatar>
          <div>
            <Fit w={114}>NAVNEET KUMAR</Fit>
            <Fit w={82}>and 43 more</Fit>
          </div>
        </Speaker>
        <MeetPanel>
          <PanelCell $w={73} $line><PeopleIcon><MdOutlinePeopleAlt size={24} /></PeopleIcon><Count>46</Count></PanelCell>
          <PanelCell $w={73} $line><MdOutlineChat size={24} /></PanelCell>
          <PanelCell $w={115}><Clock><Fit w={37}>9:51</Fit><Fit w={30}>AM</Fit></Clock></PanelCell>
          <Self>
            <Fit w={21}>You</Fit>
            <SelfAvatar><Avatar $size={30} $bg="#0097a7" $fs={16}>M</Avatar></SelfAvatar>
            <Muted><MdMicOff size={12} /></Muted>
          </Self>
        </MeetPanel>
      </MeetBar>

      <Stage>
        <Tablet>
          <PurpleHead>
            <HeadSide>
              <Status><Fit w={56}>9:51 AM</Fit><Fit w={74}>Tue 20 Oct</Fit></Status>
              <HeadIcons $pl={12} $gap={26}>
                <svg width="24" height="26" viewBox="0 0 24 26"><circle cx="10" cy="10.500" r="8" fill="none" stroke="#fff" strokeWidth="1.600" /><path d="M15.500 16.500l6 6.500" stroke="#fff" strokeWidth="1.800" strokeLinecap="round" /></svg>
                <svg width="22" height="26" viewBox="0 0 22 26"><path d="M1.500 2v8.500H10M1.500 10.500C6 5 8 2 13 2c6 0 9 6 5.500 10.500L8 24" fill="none" stroke="#fff" strokeWidth="1.700" strokeLinecap="round" strokeLinejoin="round" /></svg>
                <svg width="22" height="26" viewBox="0 0 22 26"><path d="M20.500 2v8.500H12M20.500 10.500C16 5 14 2 9 2 3 2 0 8 3.500 12.500L14.500 24" fill="none" stroke="#bd82d9" strokeWidth="1.700" strokeLinecap="round" strokeLinejoin="round" /></svg>
              </HeadIcons>
            </HeadSide>
            <HeadMiddle>
              <NoteTitle><Fit w={103}>R C's Notebook</Fit></NoteTitle>
              <RibbonTabs>
                <RibbonTab $ml={8}><Fit w={48}>Home</Fit></RibbonTab>
                <RibbonTab $ml={29}><Fit w={46}>Insert</Fit></RibbonTab>
                <RibbonTab $ml={19} $active><Fit w={42}>Draw</Fit></RibbonTab>
                <RibbonTab $ml={19}><Fit w={39}>View</Fit></RibbonTab>
              </RibbonTabs>
            </HeadMiddle>
            <HeadSide>
              <Status $right>
                <RecordPill>
                  <svg width="15" height="15" viewBox="0 0 15 15"><circle cx="7.500" cy="7.500" r="6.300" fill="none" stroke="#fff" strokeWidth="1.400" /><circle cx="7.500" cy="7.500" r="3.300" fill="#fff" /></svg>
                </RecordPill>
                <svg width="17" height="13" viewBox="0 0 17 13"><path d="M1.300 4.500Q8.500-2 15.700 4.500M4 7.500q4.500-4 9 0" fill="none" stroke="#fff" strokeWidth="2" /><path d="M6 9.800q2.500-2 5 0L8.500 12.500z" fill="#fff" /></svg>
                <MoonIcon><svg width="12" height="12" viewBox="0 0 12 12"><path d="M4 .5A6 6 0 1 0 11.500 8 5.500 5.500 0 0 1 4 .5z" fill="#b173d0" /></svg></MoonIcon>
                <Fit w={30}>62%</Fit>
                <BatteryIcon><svg width="31" height="14" viewBox="0 0 31 14"><rect x=".5" y=".5" width="27" height="13" rx="3.500" fill="none" stroke="#b173d0" /><rect x="2" y="2" width="15" height="10" rx="1.500" fill="#fff" /><path d="M29.500 5v4" stroke="#b173d0" strokeWidth="1.500" /></svg></BatteryIcon>
              </Status>
              <HeadIcons $pl={0} $gap={24}>
                <svg width="23" height="26" viewBox="0 0 23 26"><path d="M1.500 20.500h20l-2.500-4V10a7.500 8.300 0 0 0-15 0v6.500zM8.500 21c0 4 6 4 6 0" fill="none" stroke="#fff" strokeWidth="1.600" strokeLinejoin="round" /></svg>
                <svg width="25" height="26" viewBox="0 0 25 26"><path d="M9 4H4.500A2.500 2.500 0 0 0 2 6.500v14A2.500 2.500 0 0 0 4.500 23h14a2.500 2.500 0 0 0 2.500-2.500V18M15 3l8.500 8L15 19v-5c-4 0-6.500 1-9 4.500C6.500 11 10 8 15 7.500z" fill="none" stroke="#fff" strokeWidth="1.600" strokeLinejoin="round" /></svg>
                <Settings size={25} strokeWidth={1.5} color="#fff" />
                <svg width="26" height="26" viewBox="0 0 26 26"><path d="M24.500 1.500 15 11.500M15 3v8.500h9.500M1 24.500l10-10M2.500 14.500H11V24" fill="none" stroke="#fff" strokeWidth="1.600" /></svg>
              </HeadIcons>
            </HeadSide>
          </PurpleHead>

          <Ribbon>
            <BoldA>A</BoldA>
            <Fit w={74}>Text Mode</Fit>
            <Tool $ml={31} $iw={26} $gap={9}>
              <svg height="28" viewBox="0 0 26 28">
                <path d="M17 17c3-5 8-8 6.500-12S16 0 13.500 4.500C11.500 9 7 10 3.500 13S0 22 3 24s7 1 9-1.500" fill="none" stroke="#333" strokeWidth="1.300" strokeDasharray="2.500 2" />
                <path d="M20 17v8M16 21h8" stroke="#3a86cf" strokeWidth="1.500" />
              </svg>
              <Fit w={91}>Lasso Select</Fit>
            </Tool>
            <Tool $ml={26} $iw={32} $gap={8}>
              <svg height="36" viewBox="0 0 32 36">
                <path d="M0 16.500h32M0 20.500h32" stroke="#555" strokeWidth="1.300" />
                <path d="M16 14V2M11 7l5-5 5 5M16 22v12M11 29l5 5 5-5" fill="none" stroke="#26a28c" strokeWidth="1.500" />
              </svg>
              <Fit w={90}>Insert Space</Fit>
            </Tool>
            <RibbonRule $ml={20} />
            <EraserSlot>
              <svg width="57" height="50" viewBox="0 0 57 50">
                <path d="M16 0h24v17H16z" fill="#5a585c" /><path d="M16 17h24v16a3 3 0 0 1-3 3H19a3 3 0 0 1-3-3z" fill="#efb0c7" /><path d="M16 17h24v5H16z" fill="#dd93ae" />
                <path d="M16 17v16a3 3 0 0 0 3 3h18a3 3 0 0 0 3-3V17" fill="none" stroke="#c98ba1" />
                <path d="M40 41.500l6.500 5 6.500-5" fill="none" stroke="#222" strokeWidth="1.800" />
              </svg>
            </EraserSlot>
            <RibbonRule $ml={5} />
            <Pens>
              <Pen cap="#1c1a1d" tip="#000" />
              <Pen cap="#f01c72" tip="#e5005e" />
              <Pen cap="#6f63ad" tip="#5fa2a5" galaxy />
              <Marker c="#fb2a06" />
              <Marker c="#09f50c" />
              <Pen cap="#269455" tip="#0b8a47" />
            </Pens>
            <RibbonIcon $ml={24}>
              <svg width="24" height="24" viewBox="0 0 24 24"><path d="M12 0v24M0 12h24" stroke="#000" strokeWidth="2.200" /></svg>
            </RibbonIcon>
            <RibbonRule $ml={20} />
            <RibbonIcon $ml={22}>
              <svg width="26" height="24" viewBox="0 0 26 24"><path d="M10 17A8 8.300 0 1 1 16.500 8" fill="none" stroke="#333" strokeWidth="1.300" /><rect x="12" y="9" width="14" height="14" fill="#4f8fd3" /></svg>
            </RibbonIcon>
            <RibbonIcon $ml={29}>
              <svg width="31" height="31" viewBox="0 0 31 31">
                <path d="M2 4h21M3.500 0v7M21.500 0v11" stroke="#333" strokeWidth="1.500" />
                <path d="M13 19v-6.500h17V29H14M4.500 10c-5 5-4 14 8 15.500M9 20.500l4.500 5-5 3.500" fill="none" stroke="#4a93d6" strokeWidth="1.500" />
              </svg>
            </RibbonIcon>
            <RibbonIcon $ml={28}>
              <svg width="28" height="25" viewBox="0 0 28 25">
                <path d="M1 12 24 1" stroke="#23303d" strokeWidth="2.400" />
                <path d="M4 10 8 1.500 17 3M1 12c3 5 10 9 19 11M20 4c1 6 3 10 7 14M5 12c4 3 9 2 12-1L20 5M8 8c1 3 5 3 6 0M10 14l8 3" fill="none" stroke="#4f97d8" strokeWidth="1.200" />
              </svg>
            </RibbonIcon>
          </Ribbon>

          <Page>
            <Handwriting />
            <BackButton>
              <svg width="10" height="18" viewBox="0 0 10 18"><path d="M8.500 1 1.500 9l7 8" fill="none" stroke="#7a2aa8" strokeWidth="1.700" /></svg>
            </BackButton>
          </Page>
        </Tablet>
      </Stage>
    </Screen>
  );
}
